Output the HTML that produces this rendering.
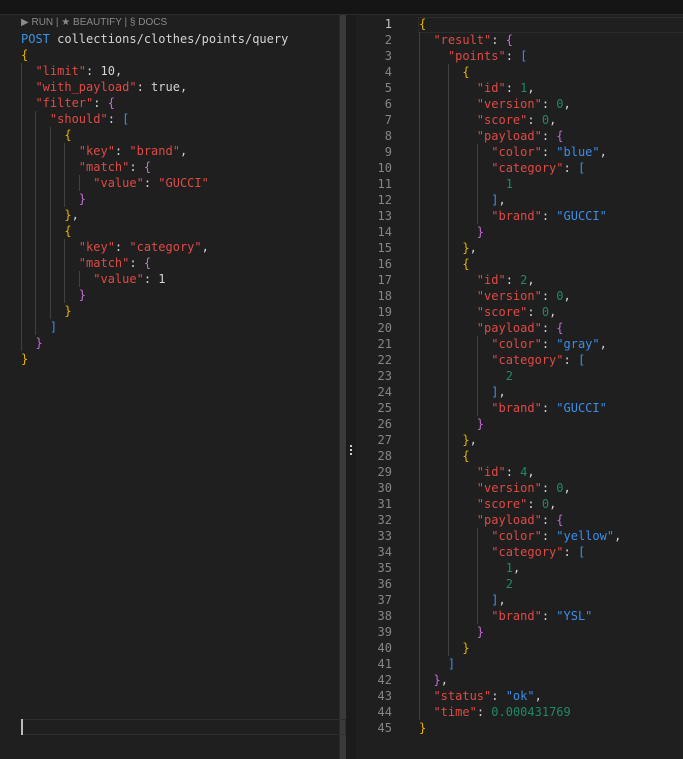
<!DOCTYPE html>
<html><head><meta charset="utf-8">
<style>
html,body{margin:0;padding:0;width:683px;height:759px;overflow:hidden;background:#1f1f1f;}
body{position:relative;font-family:"DejaVu Sans Mono","Liberation Mono",monospace;font-size:12px;}
.top{position:absolute;left:0;top:0;width:683px;height:14px;background:#151515;border-bottom:1px solid #2b2b2b;}
.hdr{position:absolute;left:21px;top:17px;font:10px "Liberation Sans","DejaVu Sans",sans-serif;color:#8a8a8a;}
.ln{position:absolute;height:16px;line-height:16px;white-space:pre;color:#d4d4d4;}
.g{position:absolute;width:1px;background:#404040;}
.num{position:absolute;width:36px;text-align:right;height:16px;line-height:16px;color:#858585;left:356px;}
.sb{position:absolute;left:339px;top:15px;width:7px;height:744px;background:#3a3a3a;border-left:1px solid #2a2a2a;}
.dv{position:absolute;left:346px;top:15px;width:10px;height:744px;background:#191b1c;}
.dots{position:absolute;left:350px;top:445px;width:2px;}
.dots i{display:block;width:2px;height:2px;background:#ccc;margin-bottom:2px;}
.inp{position:absolute;left:21px;top:719px;width:323px;height:14px;border:1px solid #2e2e2e;}
.cur{position:absolute;left:21px;top:719px;width:2px;height:16px;background:#bbb;}
.hl{position:absolute;left:418px;top:17px;width:265px;height:14px;border:1px solid #2c2c2c;}
</style></head><body>
<div class="top"></div>
<div class="hdr">▶ RUN | ★ BEAUTIFY | § DOCS</div>
<div class="sb"></div><div class="dv"></div>
<div class="dots"><i></i><i></i><i></i></div>
<div class="inp"></div><div class="cur"></div>
<div class="hl"></div>
<div id="L"></div><div id="R"></div>
<script>
var CW=7.224;
var left=['{','  "limit": 10,','  "with_payload": true,','  "filter": {','    "should": [','      {','        "key": "brand",','        "match": {','          "value": "GUCCI"','        }','      },','      {','        "key": "category",','        "match": {','          "value": 1','        }','      }','    ]','  }','}'];
var right=['{','  "result": {','    "points": [','      {','        "id": 1,','        "version": 0,','        "score": 0,','        "payload": {','          "color": "blue",','          "category": [','            1','          ],','          "brand": "GUCCI"','        }','      },','      {','        "id": 2,','        "version": 0,','        "score": 0,','        "payload": {','          "color": "gray",','          "category": [','            2','          ],','          "brand": "GUCCI"','        }','      },','      {','        "id": 4,','        "version": 0,','        "score": 0,','        "payload": {','          "color": "yellow",','          "category": [','            1,','            2','          ],','          "brand": "YSL"','        }','      }','    ]','  },','  "status": "ok",','  "time": 0.000431769','}'];
var BC=['#e8b400','#c46bd6','#3b8eea'];
function esc(s){return s.replace(/&/g,'&amp;').replace(/</g,'&lt;');}
function render(lines,x0,y0,isRight,host){
  var depth=0,stack=[],html='';
  var guides=[];
  lines.forEach(function(l,i){
    var out='',j=0;
    var ind=l.match(/^ */)[0].length;
    while(j<l.length){
      var c=l[j];
      if(c==='"'){var k=l.indexOf('"',j+1);var s=l.slice(j,k+1);var rest=l.slice(k+1);
        var isKey=/^\s*:/.test(rest);
        var col=isKey?'#df4a45':(isRight?'#3b8eea':'#df4a45');
        out+='<span style="color:'+col+'">'+esc(s)+'</span>';j=k+1;continue;}
      if(c==='{'||c==='['){out+='<span style="color:'+BC[depth%3]+'">'+c+'</span>';depth++;stack.push([i,ind]);j++;continue;}
      if(c==='}'||c===']'){depth--;var o=stack.pop();if(i-o[0]>1&&(!isRight||o[1]%4===0))guides.push([o[1],o[0]+1,i-1]);out+='<span style="color:'+BC[depth%3]+'">'+c+'</span>';j++;continue;}
      var m=l.slice(j).match(/^[0-9.]+/);
      if(m){out+='<span style="color:'+(isRight?'#1f8a63':'#d4d4d4')+'">'+m[0]+'</span>';j+=m[0].length;continue;}
      out+=esc(c);j++;
    }
    html+='<div class="ln" style="left:'+x0+'px;top:'+(y0+16*i)+'px">'+out+'</div>';
    if(isRight)html+='<div class="num" style="top:'+(y0+16*i)+'px;'+(i===0?'color:#c6c6c6':'')+'">'+(i+1)+'</div>';
  });
  guides.forEach(function(g){
    html+='<div class="g" style="left:'+Math.round(x0+g[0]*CW)+'px;top:'+(y0+16*g[1])+'px;height:'+(16*(g[2]-g[1]+1))+'px"></div>';
  });
  host.innerHTML=html;
}
render(['POST collections/clothes/points/query'].concat(left),21,31,false,document.getElementById('L'));
var p=document.querySelector('#L .ln');p.innerHTML='<span style="color:#3794e0">POST</span> collections/clothes/points/query';
render(right,419,16,true,document.getElementById('R'));
</script>
</body></html>
